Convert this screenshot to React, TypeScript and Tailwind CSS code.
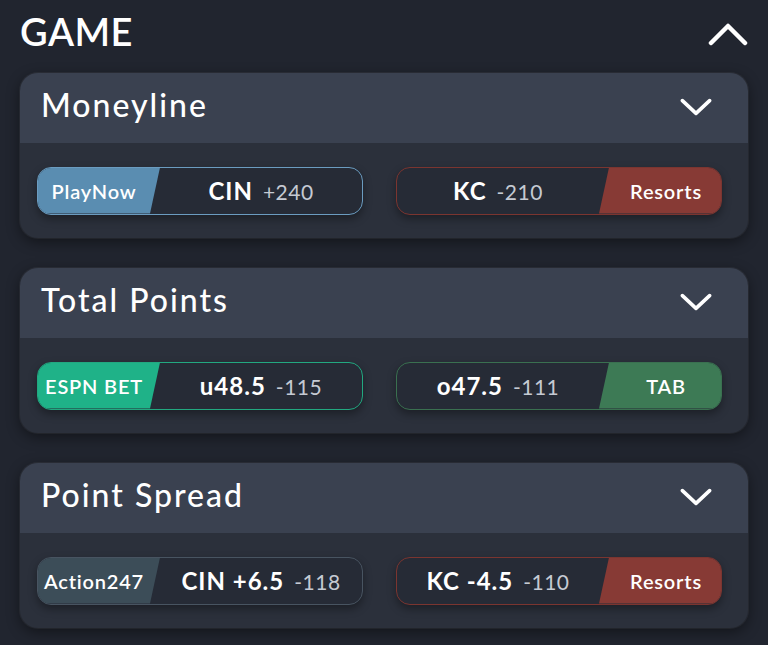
import React from "react";

type Side = {
  book: string;
  bookBg: string;
  border: string;
  main: string;
  odds: string;
};

type Market = {
  title: string;
  left: Side;
  right: Side;
};

const MARKETS: Market[] = [
  {
    title: "Moneyline",
    left: {
      book: "PlayNow",
      bookBg: "bg-[#5a8db1]",
      border: "border-[#6b9cc0]",
      main: "CIN",
      odds: "+240",
    },
    right: {
      book: "Resorts",
      bookBg: "bg-[#873a35]",
      border: "border-[#7b3530]",
      main: "KC",
      odds: "-210",
    },
  },
  {
    title: "Total Points",
    left: {
      book: "ESPN BET",
      bookBg: "bg-[#1fb288]",
      border: "border-[#22a880]",
      main: "u48.5",
      odds: "-115",
    },
    right: {
      book: "TAB",
      bookBg: "bg-[#3d7a55]",
      border: "border-[#3a7050]",
      main: "o47.5",
      odds: "-111",
    },
  },
  {
    title: "Point Spread",
    left: {
      book: "Action247",
      bookBg: "bg-[#3c4d58]",
      border: "border-[#485461]",
      main: "CIN +6.5",
      odds: "-118",
    },
    right: {
      book: "Resorts",
      bookBg: "bg-[#873a35]",
      border: "border-[#7b3530]",
      main: "KC -4.5",
      odds: "-110",
    },
  },
];

function Chevron({ up, className }: { up?: boolean; className?: string }) {
  return (
    <svg viewBox="0 0 40 24" fill="none" className={className}>
      <polyline
        points={up ? "3,21 20,4 37,21" : "3,4 20,20 37,4"}
        stroke="white"
        strokeWidth="4.5"
        strokeLinecap="round"
        strokeLinejoin="round"
      />
    </svg>
  );
}

function OddsLabel({ main, odds }: { main: string; odds: string }) {
  return (
    <div className="flex flex-1 items-baseline justify-center gap-[10px]">
      <span className="text-[24px] font-bold tracking-[1px] text-white">{main}</span>
      <span className="text-[21px] font-normal tracking-[0.5px] text-[#c5cad3]">{odds}</span>
    </div>
  );
}

function BetButton({ side, bookFirst }: { side: Side; bookFirst: boolean }) {
  const book = (
    <div
      className={`flex h-full w-[122px] shrink-0 items-center justify-center ${side.bookBg} ${
        bookFirst ? "pr-[10px]" : "pl-[12px]"
      }`}
      style={{
        clipPath: bookFirst
          ? "polygon(0 0, 100% 0, calc(100% - 10px) 100%, 0 100%)"
          : "polygon(10px 0, 100% 0, 100% 100%, 0 100%)",
      }}
    >
      <span className="whitespace-nowrap text-[20px] font-semibold tracking-[0.8px] text-white">
        {side.book}
      </span>
    </div>
  );

  return (
    <div
      className={`flex h-[48px] flex-1 items-center overflow-hidden rounded-[14px] border-[1.5px] ${side.border} bg-[#262b36] shadow-[0_4px_8px_rgba(0,0,0,0.35)]`}
    >
      {bookFirst ? book : null}
      <OddsLabel main={side.main} odds={side.odds} />
      {bookFirst ? null : book}
    </div>
  );
}

function MarketCard({ market }: { market: Market }) {
  return (
    <div className="overflow-hidden rounded-[18px] shadow-[0_4px_14px_rgba(0,0,0,0.45)] ring-1 ring-white/5">
      <div className="flex h-[70px] items-center justify-between bg-[#3a4150] pb-[6px] pl-[21px] pr-[36px]">
        <span className="text-[32px] font-medium tracking-[2px] text-white">
          {market.title}
        </span>
        <Chevron className="mt-[4px] h-[20px] w-[32px]" />
      </div>
      <div className="flex h-[95px] items-center gap-[33px] bg-[#2b303b] pl-[17px] pr-[26px]">
        <BetButton side={market.left} bookFirst />
        <BetButton side={market.right} bookFirst={false} />
      </div>
    </div>
  );
}

export default function App() {
  return (
    <div
      className="min-h-[645px] w-full bg-[#21252f] px-5 pb-4"
      style={{ fontFamily: "Lato, 'Open Sans', sans-serif" }}
    >
      <div className="flex h-[73px] items-center justify-between pb-[10px]">
        <span className="text-[38px] font-semibold tracking-[0.5px] text-white">GAME</span>
        <Chevron up className="mt-[4px] h-[24px] w-[40px]" />
      </div>
      <div className="flex flex-col gap-[30px]">
        {MARKETS.map((m) => (
          <MarketCard key={m.title} market={m} />
        ))}
      </div>
    </div>
  );
}
